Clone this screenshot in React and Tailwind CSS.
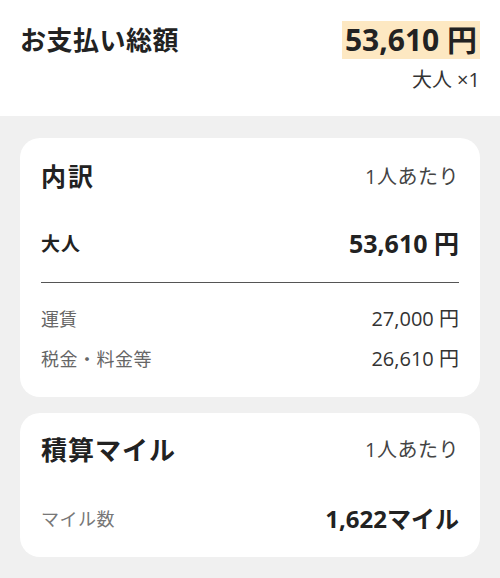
const font = { fontFamily: '"Open Sans", "Noto Sans CJK JP", sans-serif' };

function Row({ label, value, labelClass, valueClass, className = "" }) {
  return (
    <div className={`flex items-center justify-between h-[32px] ${className}`}>
      <span className={labelClass}>{label}</span>
      <span className={valueClass}>{value}</span>
    </div>
  );
}

export default function App() {
  return (
    <div className="w-[500px] h-[578px] bg-[#f0f0f0] text-[#222]" style={font}>
      <section className="bg-white h-[116px] px-5 pt-[21px] flex justify-between">
        <h1 className="text-[26px] font-bold leading-[38px] tracking-[0.5px]">お支払い総額</h1>
        <div className="flex flex-col items-end">
          <div className="bg-[#fde8c2] px-[3px] h-[38px] text-[30px] font-bold leading-[38px]">53,610 円</div>
          <div className="mt-[9px] text-[20px] text-[#333] leading-[24px]">大人 ×1</div>
        </div>
      </section>

      <div className="px-5 pt-[22px] flex flex-col gap-4">
        <div className="bg-white rounded-[20px] px-[21px] pt-[24px] pb-[22px]">
          <div className="flex items-center justify-between h-[30px]">
            <h2 className="text-[25px] font-bold tracking-[2px]">内訳</h2>
            <span className="text-[20px] text-[#444] tracking-[0.5px]">1人あたり</span>
          </div>
          <Row
            className="mt-[36px]"
            label="大人"
            value="53,610 円"
            labelClass="text-[19px] font-bold tracking-[1px]"
            valueClass="text-[25px] font-bold"
          />
          <div className="mt-[22px] border-t border-[#555]" />
          <div className="mt-[20px] flex flex-col gap-[8px]">
            <Row label="運賃" value="27,000 円" labelClass="text-[18px] text-[#666]" valueClass="text-[20px] text-[#333]" />
            <Row label="税金・料金等" value="26,610 円" labelClass="text-[18px] text-[#666] tracking-[0.5px]" valueClass="text-[20px] text-[#333]" />
          </div>
        </div>

        <div className="bg-white rounded-[20px] px-[21px] pt-[22px] pb-[22px]">
          <div className="flex items-center justify-between h-[30px]">
            <h2 className="text-[26px] font-bold tracking-[1px]">積算マイル</h2>
            <span className="text-[20px] text-[#444] tracking-[0.5px]">1人あたり</span>
          </div>
          <Row
            className="mt-[38px]"
            label="マイル数"
            value="1,622マイル"
            labelClass="text-[18px] text-[#777] tracking-[0.5px]"
            valueClass="text-[24px] font-bold"
          />
        </div>
      </div>
    </div>
  );
}
